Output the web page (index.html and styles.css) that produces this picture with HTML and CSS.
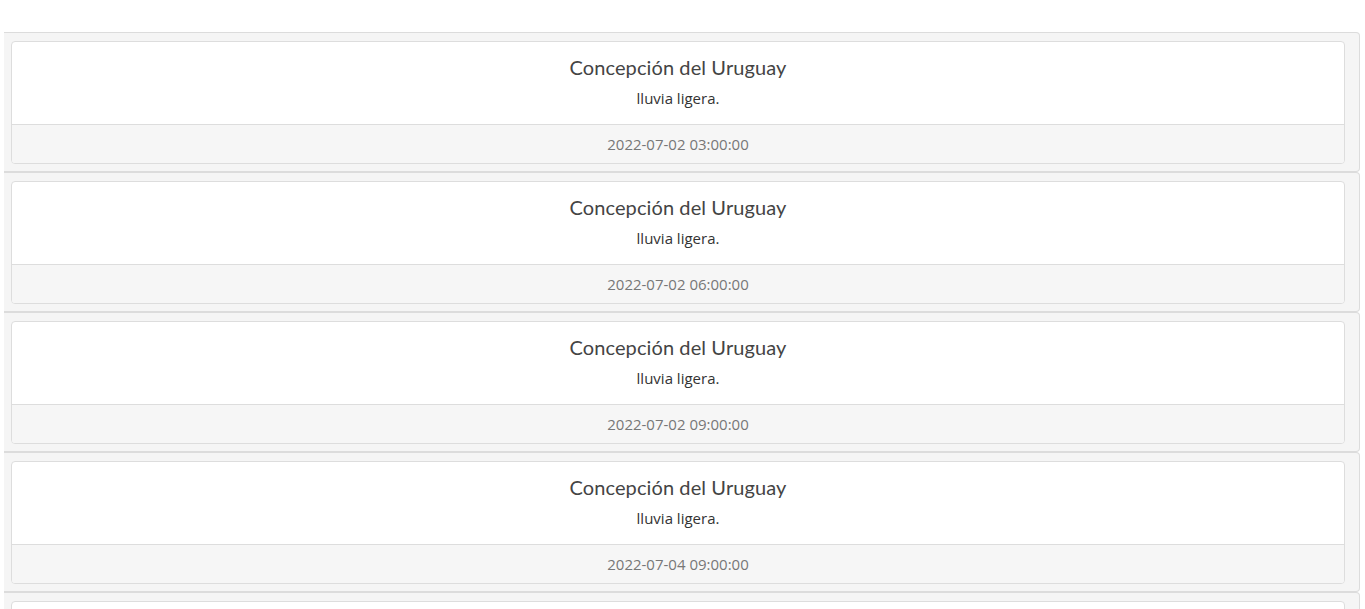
FILE: index.html
```html
<!DOCTYPE html>
<html lang="es">
<head>
<meta charset="utf-8">
<title>Pronóstico</title>
<link rel="stylesheet" href="styles.css">
</head>
<body>
<div class="list">
  <div class="well">
    <div class="card">
      <div class="card-body">
        <h5 class="card-title">Concepción del Uruguay</h5>
        <p class="card-text">lluvia ligera.</p>
      </div>
      <div class="card-footer">2022-07-02 03:00:00</div>
    </div>
  </div>
  <div class="well">
    <div class="card">
      <div class="card-body">
        <h5 class="card-title">Concepción del Uruguay</h5>
        <p class="card-text">lluvia ligera.</p>
      </div>
      <div class="card-footer">2022-07-02 06:00:00</div>
    </div>
  </div>
  <div class="well">
    <div class="card">
      <div class="card-body">
        <h5 class="card-title">Concepción del Uruguay</h5>
        <p class="card-text">lluvia ligera.</p>
      </div>
      <div class="card-footer">2022-07-02 09:00:00</div>
    </div>
  </div>
  <div class="well">
    <div class="card">
      <div class="card-body">
        <h5 class="card-title">Concepción del Uruguay</h5>
        <p class="card-text">lluvia ligera.</p>
      </div>
      <div class="card-footer">2022-07-04 09:00:00</div>
    </div>
  </div>
  <div class="well">
    <div class="card card-stub"></div>
  </div>
</div>
</body>
</html>
```
FILE: styles.css
```css
html, body {
  margin: 0;
  padding: 0;
  background: #fff;
}
body {
  font-family: "Open Sans", "Liberation Sans", sans-serif;
  color: #333;
}
.list {
  padding: 32px 5px 0 4px;
  display: flex;
  flex-direction: column;
}
.well {
  background: #f5f5f5;
  border: 1px solid #dcdcdc;
  border-left: none;
  border-radius: 0 4px 4px 0;
  padding: 8px 14px 7px 7px;
}
.card {
  background: #fff;
  border: 1px solid #dddddd;
  border-radius: 4px;
  overflow: hidden;
  text-align: center;
}
.card-stub {
  height: 121px;
}
.card-body {
  padding: 14px 10px 16px;
}
.card-title {
  margin: 0;
  font-family: "Lato", "Open Sans", sans-serif;
  font-weight: 400;
  font-size: 20px;
  line-height: 22px;
  letter-spacing: 0.1px;
  color: #444;
}
.card-text {
  margin: 10px 0 0;
  font-size: 15px;
  line-height: 20px;
  color: #333;
}
.card-footer {
  background: #f6f6f6;
  border-top: 1px solid #dddddd;
  padding: 9px 10px;
  font-size: 15px;
  line-height: 20px;
  color: #777;
}
```
